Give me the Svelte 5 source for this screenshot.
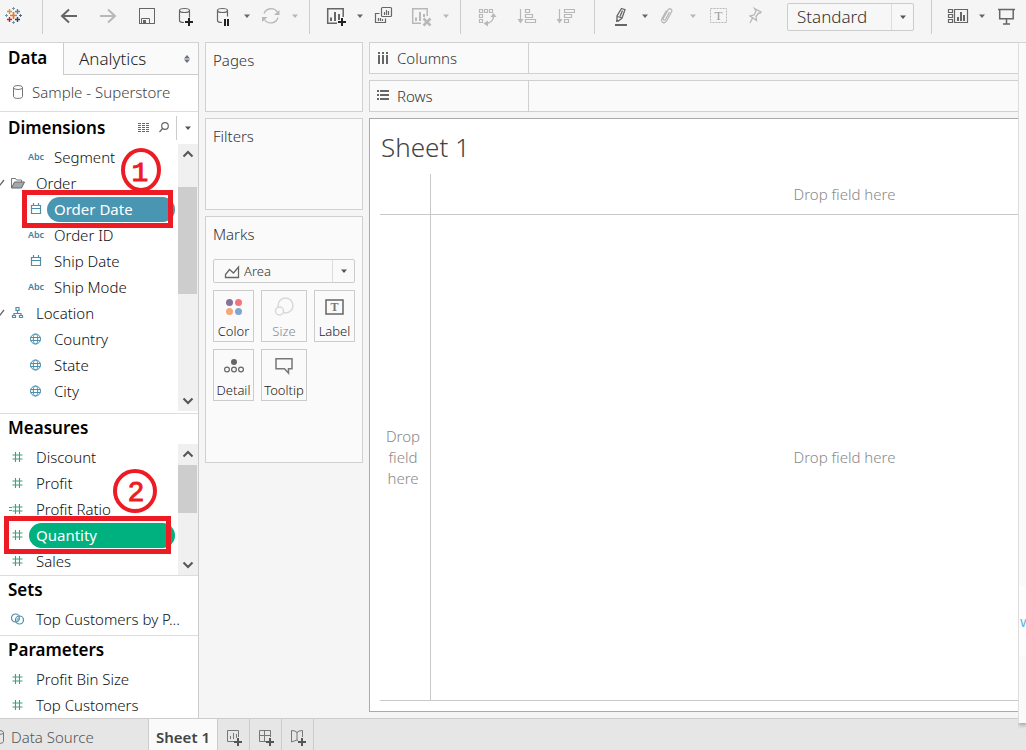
<script>
  const ink = '#666';
  const pale = '#b8b8b8';
  const icons = {
    logo: `<g fill="none" stroke-width="1.4"><path stroke="#e8762c" stroke-width="1.700" d="M11.500 8v7M8 11.500h7"/><path stroke="#eb912c" d="M7.500 5v5M5 7.500h5"/><path stroke="#5b879b" d="M15.500 5v5M13 7.500h5"/><path stroke="#c72035" d="M7.500 13v5M5 15.500h5"/><path stroke="#1f447e" d="M15.500 13v5M13 15.500h5"/><path stroke="#7199a6" stroke-width="1" d="M11.500 3v3M10 4.500h3M11.500 17v3M10 18.500h3M4.500 10v3M3 11.500h3"/><path stroke="#5c6692" stroke-width="1" d="M18.500 10v3M17 11.500h3"/></g>`,
    back: `<path fill="none" stroke="${ink}" stroke-width="2" d="M20 12H5M12 5.500L5 12l7 6.500"/>`,
    forward: `<path fill="none" stroke="${pale}" stroke-width="2" d="M4 12h15M12 5.500l7 6.500-7 6.500"/>`,
    save: `<g fill="none" stroke="${ink}"><rect x="4.500" y="4.500" width="15" height="15"/><path d="M6.500 19.500v-5h8v5"/></g><rect x="8" y="16" width="3" height="3" fill="${ink}"/>`,
    source: `<g fill="none" stroke="${ink}" stroke-width="1.200"><ellipse cx="11.500" cy="6.500" rx="5" ry="2"/><path d="M6.500 6.500v10c0 1.500 2 2 4.500 2M16.500 6.500v7"/></g><path stroke="#222" stroke-width="2" d="M16 14v8M12 18h8"/>`,
    pause: `<g fill="none" stroke="${ink}" stroke-width="1.200"><ellipse cx="11.500" cy="6.500" rx="5" ry="2"/><path d="M6.500 6.500v10c0 1.500 2 2 4.500 2M16.500 6.500v6"/></g><path stroke="#222" stroke-width="2" d="M14 15v7M17 15v7"/>`,
    refresh: `<g fill="none" stroke="${pale}" stroke-width="1.300"><path d="M5 9.500a7.500 7.500 0 0 1 13.500-1M19 13.500a7.500 7.500 0 0 1-13.500 2"/></g><path fill="${pale}" d="M20.500 6v5h-5.500zM3 13h5.500l-5.500 5z"/>`,
    sheet: `<path fill="none" stroke="${ink}" stroke-width="1.500" d="M13 19.200H3.700V4.700h15.500V13"/><path stroke="${ink}" stroke-width="2" d="M7 13.500V17M11 8v9M15 10v6"/><path stroke="#222" stroke-width="2" d="M18 14v8M14 18h8"/>`,
    duplicate: `<g fill="none" stroke="${ink}" stroke-width="1.200"><rect x="9.500" y="3.500" width="10" height="9" rx="1"/><path d="M7.500 9.500h-4v9h10v-4M12.500 8v3M14.500 6v5M16.500 7v4M6.500 14v3M8.500 14v3M10.500 15v2"/></g>`,
    clear: `<path fill="none" stroke="${pale}" stroke-width="1.500" d="M11 19.200H2.700V4.700h14.500V12"/><path stroke="${pale}" stroke-width="2" d="M6 13.500V17M10 8v9M14 10v3"/><path stroke="${pale}" stroke-width="2.500" d="M13.500 14.500l7 7M20.500 14.500l-7 7"/>`,
    swap: `<g fill="none" stroke="${pale}" stroke-width="1.200"><path d="M4.500 5.500h3v3h-3zM9.500 5.500h3v3h-3zM14.500 5.500h3v3h-3zM4.500 10.500h3v3h-3zM4.500 15.500h3v3h-3z"/><path stroke-width="1.500" d="M18.500 12c0 4-3 7-7 7.500"/></g><path fill="${pale}" d="M15.500 13h6l-3-4zM13 16.500v6l-4.500-3z"/>`,
    ascending: `<path fill="none" stroke="${pale}" stroke-width="1.200" d="M7.500 5v12M12.500 5.500h4v3h-4zM12.500 10.500h7v3h-7zM12.500 15.500h10v3h-10z"/><path fill="${pale}" d="M4.500 15h6l-3 4.500z"/>`,
    descending: `<path fill="none" stroke="${pale}" stroke-width="1.200" d="M8.500 5v12M13.500 5.500h10v3h-10zM13.500 10.500h7v3h-7zM13.500 15.500h4v3h-4z"/><path fill="${pale}" d="M5.500 15h6l-3 4.500z"/>`,
    highlight: `<path fill="none" stroke="${ink}" stroke-width="1.300" d="M12.500 4.500l3.500 1.200-3 8.300-3.500 3-1.500-1v-4zM8.500 12.500l4.500 1.500M11 12.500l2.500-6"/><path fill="${ink}" d="M7 15.500l3 2-3 .500zM6 20h12v2H6z"/>`,
    clip: `<path fill="none" stroke="${pale}" stroke-width="1.300" d="M12.500 8l-4 7.500c-1 1.500-3 .5-2-1.500l4.500-8c1.500-2.500 5-.5 3.500 2l-5 9c-2 3.500-6.500 1-4.500-2.500l4.500-8"/>`,
    text: `<rect x="5.500" y="4.500" width="16" height="14" fill="none" stroke="${pale}" stroke-dasharray="2 1"/><text x="13.500" y="16" text-anchor="middle" font-family="Liberation Serif, serif" font-size="13" fill="#999">T</text>`,
    pin: `<path fill="none" stroke="${pale}" stroke-width="1.300" d="M11.500 4.500l6.500 3.500-1 1.200-1.500-.2-2.500 3.500.500 4-6.500-4.500 4-1 2-4zM9.500 14l-2.500 5"/>`,
    show: `<g fill="none" stroke="${ink}" stroke-width="1.200"><path d="M2.500 5.500h4v3h-4zM2.500 10.500h4v3h-4zM2.500 15.500h4v3h-4zM8.500 5.500h13v13h-13z"/></g><path stroke="${ink}" stroke-width="2" d="M12 13v4M15 8v9M18 11v6"/>`,
    present: `<path fill="none" stroke="${ink}" stroke-width="1.500" d="M4 5.500h17M5.700 5.500v9.300h13.500V5.500M12.500 15v5M9 20h7"/>`,
    calendar: `<path fill="none" stroke="#4a8fac" stroke-width="1.200" d="M7.500 8.500h9v8h-9zM7.500 11.500h9M9.500 6v3M14.500 6v3"/>`,
    globe: `<g fill="none" stroke="#4a8fac"><circle cx="11.500" cy="12" r="5"/><ellipse cx="11.500" cy="12" rx="2.200" ry="5"/><path d="M6.500 10.500h10M6.500 13.500h10"/></g>`,
    tree: `<path fill="none" stroke="#4a8fac" stroke-width="1.200" d="M10 6.500h3v3h-3zM6.500 14.500h3v2h-3zM13.500 14.500h3v2h-3zM11.500 10v2.500M8 14.500v-2h7v2"/>`,
    folder: `<path fill="none" stroke="#777" d="M5.500 17V7.500h4l1 1.500h5v2"/><path fill="#a4a8ac" stroke="#666" d="M5.500 17l3-6h10l-3 6z"/>`,
    number: `<path fill="none" stroke="#3fa07c" stroke-width="1.100" d="M9.500 7v10M13.500 7v10M6.500 10h10M6.500 14h10"/>`,
    ratio: `<path fill="none" stroke="#3fa07c" stroke-width="1.100" d="M9.500 7v10M13.500 7v10M6.500 10h10M6.500 14h10M3 10.500h3M3 13.500h3"/>`,
    set: `<g fill="none" stroke="#4a8fac" stroke-width="1.200"><circle cx="9.500" cy="11" r="4"/><circle cx="13.500" cy="13" r="4"/></g><path fill="#8cbccc" d="M10.500 12.500q1-3 3-2.500 0 3-3 4.500z"/>`,
    database: `<g fill="none" stroke="#777"><ellipse cx="12" cy="7.500" rx="4.500" ry="2"/><path d="M7.500 7.500v9c0 2.600 9 2.600 9 0v-9"/></g>`,
    area: `<path fill="none" stroke="${ink}" stroke-width="1.300" d="M5.500 17.500v-3l4-5 4 3.500 5-6v10.500z"/>`,
    color: `<circle cx="7.500" cy="7.500" r="3.500" fill="#85719a"/><circle cx="16.500" cy="7.500" r="3.500" fill="#f8727b"/><circle cx="7.500" cy="16.500" r="3.500" fill="#f3a77b"/><circle cx="16.500" cy="16.500" r="3.500" fill="#80a5d0"/>`,
    size: `<g fill="#fafafa" stroke="#d8d8d8" stroke-width="1.500"><circle cx="13.500" cy="10.500" r="7.500"/><circle cx="7.500" cy="16" r="4"/></g>`,
    label: `<rect x="3" y="5" width="17" height="14" fill="none" stroke="${ink}" stroke-width="1.500"/><text x="11.500" y="16" text-anchor="middle" font-family="Liberation Serif, serif" font-size="12" font-weight="700" fill="#777">T</text>`,
    detail: `<circle cx="12" cy="8" r="3" fill="${ink}"/><g fill="none" stroke="${ink}" stroke-width="1.200"><circle cx="5" cy="15.500" r="2.400"/><circle cx="12" cy="15.500" r="2.400"/><circle cx="19" cy="15.500" r="2.400"/></g>`,
    tooltip: `<path fill="none" stroke="#777" stroke-width="1.500" d="M4 4.700h16v10h-3.500V19l-4-4.300H4z"/>`,
    columns: `<path stroke="${ink}" stroke-width="2" stroke-dasharray="2 1 9" d="M8 6v12M12 6v12M16 6v12"/>`,
    rows: `<path stroke="${ink}" stroke-width="2" stroke-dasharray="2 1 9" d="M6 7h12M6 11h12M6 15h12"/>`,
    grid: `<path stroke="${ink}" stroke-dasharray="3 1" d="M6 7.500h12M6 9.500h12M6 11.500h12M6 13.500h12M6 15.500h12"/>`,
    search: `<path fill="none" stroke="${ink}" stroke-width="1.200" d="M7.500 16l3.500-4"/><circle cx="13" cy="10" r="3.300" fill="none" stroke="${ink}" stroke-width="1.200"/>`,
    newSheet: `<path fill="none" stroke="#777" d="M12 16.500H5.500v-11h11V12M8.500 11v3M11.500 8v6M14.500 9v4"/><path stroke="#555" stroke-width="2" d="M16 13v8M12 17h8"/>`,
    newDashboard: `<path fill="none" stroke="#777" d="M12 16.500H5.500v-11h11V12M5.500 10.500h11M10.500 5.500v11"/><path stroke="#555" stroke-width="2" d="M16 13v8M12 17h8"/>`,
    newStory: `<path fill="none" stroke="#777" d="M12 15.500l-1-.500-5.500 2V5.500l3.500 .500 2 1.500 2-1.500 3.500-.500V12M11 7v8"/><path stroke="#555" stroke-width="2" d="M16 13v8M12 17h8"/>`
  };

  const groups = [
    [['back', 'Undo'], ['forward', 'Redo'], ['save', 'Save'], ['source', 'New data source'], ['pause', 'Pause updates', ink], ['refresh', 'Run update', pale]],
    [['sheet', 'New worksheet', ink], ['duplicate', 'Duplicate'], ['clear', 'Clear sheet', pale]],
    [['swap', 'Swap rows and columns'], ['ascending', 'Sort ascending'], ['descending', 'Sort descending']]
  ];
  const formatTools = [['highlight', 'Highlight', ink], ['clip', 'Group members', pale], ['text', 'Show mark labels'], ['pin', 'Fix axes']];
  const viewTools = [['show', 'Show cards', ink], ['present', 'Presentation mode']];

  const dimensions = [
    { icon: 'abc', name: 'Segment' },
    { icon: 'folder', name: 'Order', open: true },
    { icon: 'calendar', name: 'Order Date', pill: 'blue' },
    { icon: 'abc', name: 'Order ID' },
    { icon: 'calendar', name: 'Ship Date' },
    { icon: 'abc', name: 'Ship Mode' },
    { icon: 'tree', name: 'Location', open: true },
    { icon: 'globe', name: 'Country' },
    { icon: 'globe', name: 'State' },
    { icon: 'globe', name: 'City' }
  ];
  const measures = [
    { icon: 'number', name: 'Discount' },
    { icon: 'number', name: 'Profit' },
    { icon: 'ratio', name: 'Profit Ratio' },
    { icon: 'number', name: 'Quantity', pill: 'green' },
    { icon: 'number', name: 'Sales' }
  ];
  const marks = [['color', 'Color'], ['size', 'Size'], ['label', 'Label'], ['detail', 'Detail'], ['tooltip', 'Tooltip']];
  const newTabs = [['newSheet', 'New worksheet'], ['newDashboard', 'New dashboard'], ['newStory', 'New story']];
</script>

{#snippet icon(name)}
  <svg class="icon" width="24" height="24" viewBox="0 0 24 24" aria-hidden="true">{@html icons[name]}</svg>
{/snippet}

{#snippet caret(color)}
  <svg class="caret" width="12" height="8" viewBox="0 0 12 8" aria-hidden="true"><path d="M3 2.500h6L6 6z" fill={color} /></svg>
{/snippet}

{#snippet tools(list)}
  {#each list as [name, label, arrow]}
    <span class="tool" class:split={arrow}>
      <button aria-label={label}>{@render icon(name)}</button>
      {#if arrow}<button aria-label="{label} options">{@render caret(arrow)}</button>{/if}
    </span>
  {/each}
{/snippet}

{#snippet field(item, nested)}
  <li class="field" class:nested={nested && !item.open}>
    {#if item.open}<svg class="chevron" width="5" height="8" viewBox="0 0 5 8" aria-hidden="true"><path d="M-3 3l3 3 4-5" fill="none" stroke="#666" stroke-width="1.300" /></svg>{/if}
    {#if item.icon === 'abc'}<span class="abc">Abc</span>{:else}{@render icon(item.icon)}{/if}
    <span class="name {item.pill ?? ''}" class:pill={item.pill}>{item.name}</span>
  </li>
{/snippet}

{#snippet scrollbar(kind)}
  <div class="scrollbar {kind}">
    <button aria-label="Scroll up"><svg width="12" height="8" viewBox="0 0 12 8"><path d="M1.500 6.500L6 2l4.500 4.500" fill="none" stroke="#555" stroke-width="2" /></svg></button>
    <div class="track"><div class="thumb"></div></div>
    <button aria-label="Scroll down"><svg width="12" height="8" viewBox="0 0 12 8"><path d="M1.500 1.500L6 6l4.500-4.500" fill="none" stroke="#555" stroke-width="2" /></svg></button>
  </div>
{/snippet}

<div class="app">
  <header class="toolbar">
    <div class="brand">{@render icon('logo')}</div>
    {#each groups as group}
      <div class="group">{@render tools(group)}</div>
    {/each}
    <div class="group">
      {@render tools(formatTools)}
      <div class="fit">
        <select aria-label="Fit"><option>Standard</option></select>
        <span class="drop">{@render caret('#555')}</span>
      </div>
    </div>
    <div class="group">{@render tools(viewTools)}</div>
  </header>

  <div class="workspace">
    <aside class="sidebar">
      <div class="tabs">
        <button class="tab active">Data</button>
        <button class="tab">Analytics
          <svg width="6" height="8" viewBox="0 0 6 8" aria-hidden="true"><path d="M0 3.500h6L3 0zM0 4.500h6L3 8z" fill="#68707c" /></svg>
        </button>
      </div>
      <div class="datasource">{@render icon('database')}<span>Sample - Superstore</span></div>

      <section>
        <div class="heading first">
          <h2>Dimensions</h2>
          <button aria-label="View data">{@render icon('grid')}</button>
          <button aria-label="Find field">{@render icon('search')}</button>
          <button class="more" aria-label="Dimension options">{@render caret('#555')}</button>
        </div>
        <div class="list tall">
          <ul>{#each dimensions as item}{@render field(item, true)}{/each}</ul>
          {@render scrollbar('upper')}
          <div class="frame date"></div>
          <svg class="badge one" width="42" height="46" viewBox="0 0 42 46"><ellipse cx="20" cy="23" rx="18" ry="20" /><text x="19" y="34">1</text></svg>
        </div>
      </section>

      <section>
        <div class="heading"><h2>Measures</h2></div>
        <div class="list">
          <ul>{#each measures as item}{@render field(item, false)}{/each}</ul>
          {@render scrollbar('lower')}
          <div class="frame quantity"></div>
          <svg class="badge two" width="46" height="46" viewBox="0 0 46 46"><circle cx="23" cy="23" r="20" /><text x="24" y="33">2</text></svg>
        </div>
      </section>

      <section class="sets">
        <div class="heading"><h2>Sets</h2></div>
        <ul>{@render field({ icon: 'set', name: 'Top Customers by P...' }, false)}</ul>
      </section>

      <section>
        <div class="heading"><h2>Parameters</h2></div>
        <ul>
          {@render field({ icon: 'number', name: 'Profit Bin Size' }, false)}
          {@render field({ icon: 'number', name: 'Top Customers' }, false)}
        </ul>
      </section>
    </aside>

    <div class="cards">
      <section class="card pages"><h3>Pages</h3></section>
      <section class="card filters"><h3>Filters</h3></section>
      <section class="card marks">
        <h3>Marks</h3>
        <div class="marktype">
          {@render icon('area')}
          <select aria-label="Mark type"><option>Area</option></select>
          <span class="drop">{@render caret('#555')}</span>
        </div>
        <div class="markgrid">
          {#each marks as [name, label]}
            <button class="mark {name}">{@render icon(name)}<span>{label}</span></button>
          {/each}
        </div>
      </section>
    </div>

    <main class="canvas">
      <div class="shelf"><span class="shelfname">{@render icon('columns')}Columns</span></div>
      <div class="shelf"><span class="shelfname">{@render icon('rows')}Rows</span></div>
      <section class="sheet">
        <h1>Sheet 1</h1>
        <div class="view">
          <div class="corner"></div>
          <div class="zone top"><span>Drop field here</span></div>
          <div class="zone side"><span>Drop field here</span></div>
          <div class="zone body"><span>Drop field here</span></div>
        </div>
      </section>
    </main>
    <div class="panel"><div class="peek"><span>w</span></div></div>
  </div>

  <footer class="sheets">
    <button class="sourcetab">{@render icon('database')}Data Source</button>
    <button class="current">Sheet 1</button>
    {#each newTabs as [name, label]}
      <button class="newtab" aria-label={label}>{@render icon(name)}</button>
    {/each}
  </footer>
</div>

<style>
  :global(body) { margin: 0; }
  .app, .app * { box-sizing: border-box; }
  .app {
    display: flex;
    flex-direction: column;
    min-height: 100vh;
    overflow: hidden;
    background: #f5f5f5;
    color: #222;
    font: 300 15px/20px "Noto Sans", sans-serif;
  }
  button, select { font: inherit; color: inherit; border: 0; background: none; padding: 0; margin: 0; }
  select { appearance: none; }
  h1, h2, h3, ul { margin: 0; padding: 0; font-weight: 300; }
  li { list-style: none; }
  svg { display: block; flex: none; }

  .toolbar { display: flex; height: 42px; flex: none; }
  .brand { width: 42px; padding: 4px 0 0 2px; flex: none; }
  .group { display: flex; height: 34px; padding: 4px 2px 0 14px; border-left: 1px solid #ccc; flex: none; }
  .tool { display: flex; align-items: center; height: 24px; margin-right: 14px; }
  .group:nth-child(2) .tool:nth-child(-n + 2) { margin-right: 15px; }
  .tool.split { gap: 6px; margin-right: 6px; }
  .group:nth-child(4) { padding-right: 5px; }
  .fit, .marktype { display: flex; border: 1px solid #ccc; border-radius: 2px; background: #fafafa; }
  .fit { width: 127px; height: 28px; margin: -1px 15px 0 6px; background: #f7f7f7; }
  .fit select { flex: 1; min-width: 0; padding-left: 9px; font-size: 17px; color: #333; }
  .drop { display: flex; align-items: center; justify-content: center; width: 22px; border-left: 1px solid #ddd; }

  .workspace { position: relative; display: flex; flex: 1; min-width: 0; }
  .sidebar { width: 199px; flex: none; background: #fff; border-top: 1px solid #d4d4d4; border-right: 1px solid #ccc; }
  .tabs { display: flex; height: 32px; }
  .tab { display: flex; align-items: center; justify-content: space-between; flex: 1; padding: 0 8px 0 15px; font-size: 17px; background: #fafafa; border: solid #ccc; border-width: 0 0 1px 1px; }
  .tab.active { flex: none; width: 63px; padding: 0 0 2px 8px; background: #fff; border: 0; font-weight: 600; color: #000; }
  .datasource { display: flex; align-items: center; gap: 2px; height: 36px; padding: 0 0 2px 6px; color: #444; }
  section { min-width: 0; }
  .sidebar section { border-top: 1px solid #ddd; }
  .heading { display: flex; align-items: center; height: 30px; padding: 0 0 3px 8px; }
  .heading.first { height: 32px; padding-bottom: 1px; }
  h2 { flex: 1; font-size: 17px; font-weight: 600; color: #000; }
  .heading button { width: 20px; display: flex; justify-content: center; }
  .heading .more { width: 22px; height: 24px; align-items: center; margin-left: 2px; border-left: 1px solid #ccc; }
  .list { position: relative; display: flex; height: 131px; }
  .list.tall { height: 269px; }
  .list ul { flex: 1; min-width: 0; }
  .field { position: relative; display: flex; align-items: center; height: 26px; padding-left: 6px; }
  .field.nested { padding-left: 24px; }
  .chevron { position: absolute; left: 0; top: 9px; }
  .abc { width: 24px; text-align: center; color: #3d83a3; font-size: 9px; font-weight: 600; }
  .name { padding-left: 6px; white-space: nowrap; color: #111; }
  .name.pill { flex: 1; height: 25px; margin: 0 3px 0 -1px; padding: 2px 0 0 7px; border-radius: 13px; color: #fff; font-weight: 400; }
  .blue { background: #4996b2; }
  .green { background: #00b180; }
  .scrollbar { display: flex; flex-direction: column; width: 20px; background: #f0f0f0; }
  .scrollbar button { display: flex; justify-content: center; align-items: center; width: 19px; height: 20px; }
  .track { flex: 1; }
  .thumb { width: 19px; background: #cdcdcd; height: 48px; margin-top: 1px; }
  .scrollbar.upper { margin-bottom: 2px; }
  .upper .thumb { height: 107px; margin-top: 23px; }
  .frame { position: absolute; border: 5px solid #ed1c24; }
  .frame.date { left: 22px; top: 46px; width: 151px; height: 38px; }
  .frame.quantity { left: 4px; top: 72px; width: 167px; height: 38px; }
  .badge { position: absolute; }
  .badge ellipse, .badge circle { fill: none; stroke: #ed1c24; stroke-width: 4; }
  .badge text { text-anchor: middle; fill: #ed1c24; stroke: #ed1c24; stroke-width: 1; font: 400 28px "Liberation Sans", sans-serif; }
  .badge.one { left: 121px; top: 3px; }
  .badge.one text { font-family: "Liberation Mono", monospace; }
  .badge.two { left: 112px; top: 24px; }
  .sets { padding-bottom: 3px; }

  .cards { display: flex; flex-direction: column; gap: 6px; width: 158px; flex: none; margin: 0 6px; }
  .card { padding: 7px; border: 1px solid #d0d0d0; background: #fafafa; }
  h3 { font-size: 15px; color: #333; }
  .pages { height: 70px; }
  .filters { height: 92px; }
  .marks { height: 247px; }
  .marktype { height: 24px; margin-top: 15px; padding-left: 6px; font-size: 13px; }
  .marktype select { flex: 1; min-width: 0; color: #333; }
  .markgrid { display: grid; grid-template-columns: 41px 46px 41px; gap: 7px; margin-top: 7px; }
  .mark { display: flex; flex-direction: column; align-items: center; height: 52px; padding-top: 4px; border: 1px solid #ccc; font-size: 13px; line-height: 24px; white-space: nowrap; }
  .mark.size { color: #888; }

  .canvas { display: flex; flex-direction: column; flex: 1; min-width: 0; gap: 6px; margin-bottom: 6px; }
  .shelf { height: 32px; border: 1px solid #d0d0d0; border-right: 0; background: #fafafa; }
  .shelfname { display: flex; align-items: center; gap: 2px; width: 159px; height: 30px; padding-left: 1px; border-right: 1px solid #d0d0d0; color: #333; }
  .sheet { display: flex; flex-direction: column; flex: 1; border: 1px solid #aaa; border-right: 0; background: #fff; padding: 9px 0 10px 10px; }
  h1 { padding-left: 1px; font-size: 26px; line-height: 38px; color: #444; }
  .view { display: grid; grid-template: 41px 1fr / 51px 1fr; flex: 1; margin-top: 8px; border-bottom: 1px solid #c8c8c8; overflow: hidden; }
  .corner, .top { border-bottom: 1px solid #c8c8c8; }
  .corner, .side { border-right: 1px solid #c8c8c8; }
  .zone { display: flex; align-items: center; justify-content: center; color: #888; font-size: 15px; line-height: 21px; text-align: center; }
  .top, .body { margin-right: -232px; }
  .side { padding: 0 6px 0 2px; }
  .panel { position: absolute; right: 0; top: 0; bottom: -5px; width: 8px; border-left: 1px solid #ddd; background: #fafafa; box-shadow: 1px 2px 4px #999; border-top: 1px solid #d4d4d4; clip-path: inset(0 0 -6px 0); display: flex; align-items: center; overflow: hidden; padding-top: 476px; }
  .peek { display: flex; align-items: center; height: 70px; color: #5bb8e8; font-size: 15px; font-weight: 400; background: #fdfdfd; padding-left: 1px; }

  .sheets { display: flex; height: 32px; flex: none; border-top: 1px solid #ccc; background: #e6e6e6; color: #555; }
  .sheets button { display: flex; align-items: center; padding-top: 4px; border-right: 1px solid #ccc; }
  .sheets .sourcetab { width: 149px; }
  .sourcetab :global(svg) { margin-left: -13px; }
  .sheets .current { width: 69px; justify-content: center; background: #fafafa; font-weight: 600; color: #444; }
  .sheets .newtab { width: 32px; justify-content: center; }
</style>
